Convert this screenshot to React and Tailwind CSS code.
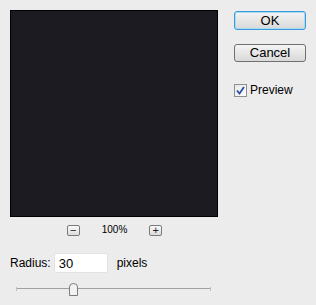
import { useState } from 'react';

const font = { fontFamily: '"Liberation Sans", Arial, sans-serif' };

const SmallButton = ({ children }) => (
  <div className="flex h-[11px] w-[13px] items-center justify-center rounded-[2px] border border-[#7a7a7a] bg-gradient-to-b from-[#fafafa] to-[#dcdcdc] text-[11px] leading-none text-[#222]">
    {children}
  </div>
);

const DialogButton = ({ label, primary }) => (
  <button
    className={
      primary
        ? 'h-[19px] w-[72px] rounded-[3px] border border-[#3d9ad8] bg-gradient-to-b from-[#f4f4f4] to-[#d9d9d9] text-[13px] leading-none text-black shadow-[inset_0_0_0_1px_#a8dcf5]'
        : 'h-[18px] w-[72px] rounded-[3px] border border-[#707070] bg-gradient-to-b from-[#f4f4f4] to-[#d9d9d9] text-[13px] leading-none text-black'
    }
  >
    {label}
  </button>
);

const App = () => {
  const [preview, setPreview] = useState(true);
  const [radius, setRadius] = useState('30');

  return (
    <div className="flex h-[305px] w-[316px] bg-[#ececec] pl-[10px] pt-[10px]" style={font}>
      <div className="flex w-[208px] flex-col">
        <div className="h-[207px] w-[208px] border border-black bg-[#1c1b22]"></div>

        <div className="mt-[8px] flex h-[10px] items-center justify-center gap-[22px] pl-[1px]">
          <SmallButton>−</SmallButton>
          <span className="text-[10px] leading-none text-black">100%</span>
          <SmallButton>+</SmallButton>
        </div>

        <div className="mt-[18px] flex h-[20px] items-center">
          <span className="text-[12px] text-black">Radius:</span>
          <input
            className="ml-[3px] h-[20px] w-[54px] rounded-[2px] border border-[#e2e2e2] bg-white px-[4px] text-[13px] text-black outline-none"
            style={font}
            value={radius}
            onChange={(e) => setRadius(e.target.value)}
          />
          <span className="ml-[9px] text-[12px] text-black">pixels</span>
        </div>

        <div className="relative mt-[10px] ml-[6px] h-[12px] w-[195px]">
          <div className="absolute left-0 right-0 top-[5px] h-[2px] border-t border-[#a0a0a0] border-b-white"></div>
          <div className="absolute left-0 top-[4px] h-[4px] w-px bg-[#c0c0c0]"></div>
          <div className="absolute right-0 top-[4px] h-[4px] w-px bg-[#c0c0c0]"></div>
          <svg className="absolute left-[52px] top-0" width="11" height="13" viewBox="0 0 11 13">
            <path d="M1.5 12.5 V4 Q1.5 0.5 5.5 0.5 Q9.5 0.5 9.5 4 V12.5 Z" fill="#f2f2f2" stroke="#7b7b7b" />
          </svg>
        </div>
      </div>

      <div className="ml-[16px] flex flex-col pt-[1px]">
        <DialogButton label="OK" primary />
        <div className="mt-[10px]">
          <DialogButton label="Cancel" />
        </div>
        <label className="mt-[17px] flex items-center gap-[3px] text-[12px] text-black">
          <span
            className="flex h-[13px] w-[13px] items-center justify-center border border-[#8f8f8f] bg-gradient-to-br from-[#e6e6e6] to-white"
            onClick={() => setPreview(!preview)}
          >
            {preview && (
              <svg width="9" height="9" viewBox="0 0 9 9">
                <path d="M1 4.5 L3.5 7.5 L8 1" fill="none" stroke="#2b4fa6" strokeWidth="1.8" />
              </svg>
            )}
          </span>
          Preview
        </label>
      </div>
    </div>
  );
};

export default App;
